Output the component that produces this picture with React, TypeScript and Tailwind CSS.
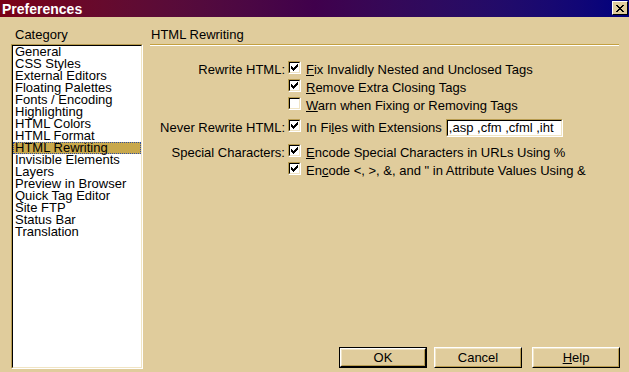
import React from "react";

const FACE = "bg-[#e0cc9c]";

function Check({ checked }: { checked: boolean }) {
  return (
    <span className="inline-block w-[13px] h-[13px] border border-t-[#b89c50] border-l-[#b89c50] border-r-white border-b-white shrink-0">
      <span className="block w-full h-full border border-t-black border-l-black border-r-[#f0e4c4] border-b-[#f0e4c4] bg-white">
        {checked && (
          <svg width="9" height="9" viewBox="0 0 9 9" shapeRendering="crispEdges" className="block">
            <rect x="7" y="1" width="1" height="3" fill="#000" />
            <rect x="6" y="2" width="1" height="3" fill="#000" />
            <rect x="5" y="3" width="1" height="3" fill="#000" />
            <rect x="4" y="4" width="1" height="3" fill="#000" />
            <rect x="3" y="5" width="1" height="3" fill="#000" />
            <rect x="2" y="4" width="1" height="3" fill="#000" />
            <rect x="1" y="3" width="1" height="3" fill="#000" />
          </svg>
        )}
      </span>
    </span>
  );
}

function Button({ children, def }: { children: React.ReactNode; def?: boolean }) {
  const inner = (
    <div className="w-full h-full border border-t-white border-l-white border-r-black border-b-black">
      <div className="w-full h-full border border-t-[#f0e4c4] border-l-[#f0e4c4] border-r-[#b89c50] border-b-[#b89c50] flex items-center justify-center leading-none">
        {children}
      </div>
    </div>
  );
  return (
    <div className={`w-[88px] h-[21px] ${def ? "border border-black" : ""}`}>
      {def ? (
        <div className="w-full h-full border border-t-white border-l-white border-r-black border-b-black">
          <div className="w-full h-full border border-t-[#f0e4c4] border-l-[#f0e4c4] border-r-[#b89c50] border-b-[#b89c50] flex items-center justify-center leading-none">
            {children}
          </div>
        </div>
      ) : (
        inner
      )}
    </div>
  );
}

const items = [
  "General",
  "CSS Styles",
  "External Editors",
  "Floating Palettes",
  "Fonts / Encoding",
  "Highlighting",
  "HTML Colors",
  "HTML Format",
  "HTML Rewriting",
  "Invisible Elements",
  "Layers",
  "Preview in Browser",
  "Quick Tag Editor",
  "Site FTP",
  "Status Bar",
  "Translation",
];

function Row({ label, checked, children }: { label?: string; checked: boolean; children: React.ReactNode }) {
  return (
    <div className="flex items-center h-[18px]">
      <div className="w-[136px] text-right pr-[1px] whitespace-nowrap">{label}</div>
      <div className="ml-[2px]">
        <Check checked={checked} />
      </div>
      <div className="ml-[5px] whitespace-nowrap">{children}</div>
    </div>
  );
}

export default function App() {
  return (
    <div
      className={`w-[629px] h-[372px] ${FACE} flex flex-col overflow-hidden text-black text-[13px]`}
      style={{ fontFamily: '"Liberation Sans", Arial, sans-serif' }}
    >
      {/* Title bar */}
      <div className="h-[17px] flex items-center bg-gradient-to-r from-[#7a0014] via-[#40004c] to-[#00007e] relative">
        <span className="pl-[2px] text-white font-bold text-[14px] leading-none">Preferences</span>
        <div className="absolute right-[1px] top-[1px] w-[16px] h-[14px] border border-t-white border-l-white border-r-black border-b-black bg-[#e0cc9c] flex items-center justify-center">
          <svg width="8" height="7" viewBox="0 0 8 7" shapeRendering="crispEdges">
            <path d="M0 0h2v1h-2zM6 0h2v1h-2zM1 1h2v1h-2zM5 1h2v1h-2zM2 2h4v1h-4zM3 3h2v1h-2zM2 4h4v1h-4zM1 5h2v1h-2zM5 5h2v1h-2zM0 6h2v1h-2zM6 6h2v1h-2z" fill="#000" />
          </svg>
        </div>
      </div>

      <div className="flex flex-1 pl-[11px]">
        {/* Left column */}
        <div className="w-[132px] flex flex-col">
          <div className="h-[27px] pl-[4px] pt-[11px] leading-[13px]">Category</div>
          <div className="h-[325px] border border-t-[#b89c50] border-l-[#b89c50] border-r-white border-b-white">
            <div className="w-full h-full border border-t-black border-l-black border-r-[#f0e4c4] border-b-[#f0e4c4] bg-white pt-[0px]">
              {items.map((it) =>
                it === "HTML Rewriting" ? (
                  <div
                    key={it}
                    className="h-[12px] leading-[12px] pl-[1px] bg-[#c8a84c] border border-dotted border-[#3050a0] whitespace-nowrap"
                  >
                    <span className="relative -top-[1px]">{it}</span>
                  </div>
                ) : (
                  <div key={it} className="h-[12px] leading-[12px] pl-[2px] whitespace-nowrap">
                    {it}
                  </div>
                )
              )}
            </div>
          </div>
        </div>

        {/* Right column */}
        <div className="flex flex-col ml-[7px] flex-1 pr-[10px]">
          <div className="h-[27px] pl-[1px] pt-[11px] leading-[13px]">HTML Rewriting</div>
          <div className="h-[2px] border-t border-t-[#c4a040] border-b border-b-white" />

          <div className="mt-[15px] flex flex-col">
            <Row label="Rewrite HTML:" checked>
              <u>F</u>ix Invalidly Nested and Unclosed Tags
            </Row>
            <Row checked>
              <u>R</u>emove Extra Closing Tags
            </Row>
            <Row checked={false}>
              <u>W</u>arn when Fixing or Removing Tags
            </Row>

            <div className="flex items-center h-[20px] mt-[3px]">
              <div className="w-[136px] text-right pr-[1px] whitespace-nowrap">Never Rewrite HTML:</div>
              <div className="ml-[2px]">
                <Check checked />
              </div>
              <div className="ml-[5px] whitespace-nowrap">
                In Fi<u>l</u>es with Extensions
              </div>
              <div className="ml-[4px] w-[117px] h-[18px] border border-t-[#b89c50] border-l-[#b89c50] border-r-white border-b-white">
                <div className="w-full h-full border border-t-black border-l-black border-r-[#f0e4c4] border-b-[#f0e4c4] bg-white pl-[1px] leading-[14px] whitespace-nowrap overflow-hidden">
                  ,asp ,cfm ,cfml ,iht
                </div>
              </div>
            </div>

            <div className="mt-[6px]">
              <Row label="Special Characters:" checked>
                <u>E</u>ncode Special Characters in URLs Using %
              </Row>
              <Row checked>
                En<u>c</u>ode &lt;, &gt;, &amp;, and &quot; in Attribute Values Using &amp;
              </Row>
            </div>
          </div>

          <div className="mt-auto mb-[4px] flex justify-end gap-[7px] -mr-[1px]">
            <Button def>OK</Button>
            <Button>Cancel</Button>
            <div className="ml-[3px]">
              <Button>
                <u>H</u>elp
              </Button>
            </div>
          </div>
        </div>
      </div>
    </div>
  );
}
